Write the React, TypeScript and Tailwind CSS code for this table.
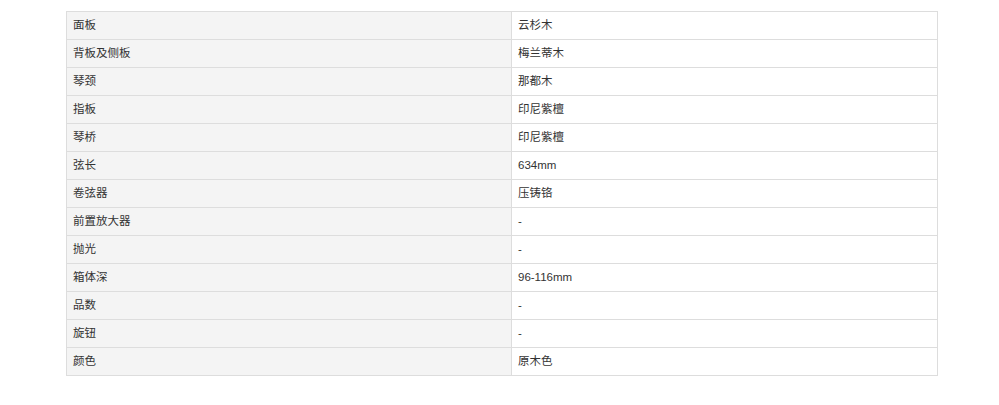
const SPECS: [string, string][] = [
  ["面板", "云杉木"],
  ["背板及侧板", "梅兰蒂木"],
  ["琴颈", "那都木"],
  ["指板", "印尼紫檀"],
  ["琴桥", "印尼紫檀"],
  ["弦长", "634mm"],
  ["卷弦器", "压铸铬"],
  ["前置放大器", "-"],
  ["抛光", "-"],
  ["箱体深", "96-116mm"],
  ["品数", "-"],
  ["旋钮", "-"],
  ["颜色", "原木色"],
];

export default function App() {
  return (
    <div
      className="min-h-[405px] w-full bg-white pt-[11px] text-[11.5px] text-[#333]"
      style={{ fontFamily: '"Liberation Sans", "Noto Sans CJK SC", sans-serif' }}
    >
      <div className="ml-[66px] w-[872px] border-l border-t border-[#dddddd]">
        {SPECS.map(([label, value]) => (
          <div className="flex" key={label}>
            <div className="flex h-[28px] w-[445px] items-center border-b border-r border-[#dddddd] bg-[#f4f4f4] pl-[6px] pt-px">
              {label}
            </div>
            <div className="flex h-[28px] w-[426px] items-center border-b border-r border-[#dddddd] bg-white pl-[6px] pt-px">
              {value}
            </div>
          </div>
        ))}
      </div>
    </div>
  );
}
